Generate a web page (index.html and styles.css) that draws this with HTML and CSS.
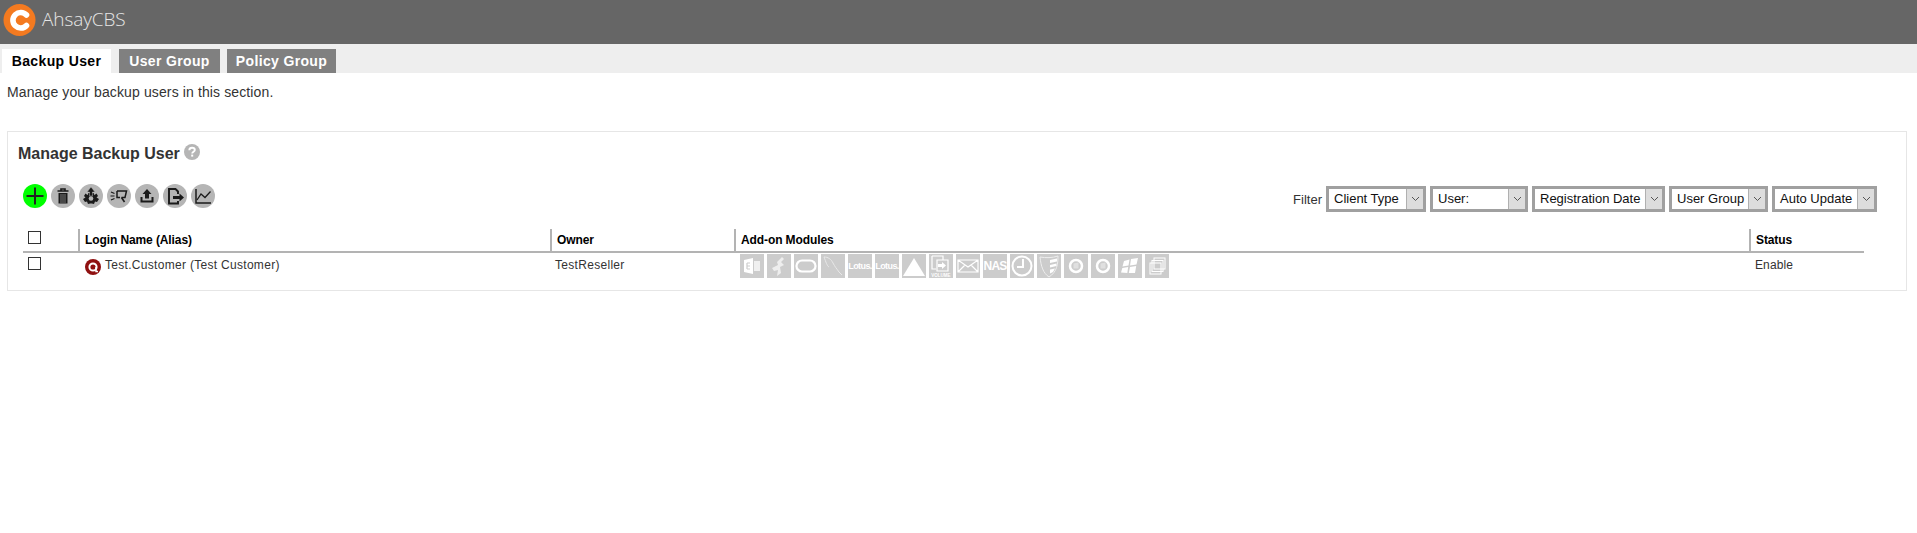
FILE: index.html
```html
<!DOCTYPE html>
<html lang="en">
<head>
<meta charset="utf-8">
<title>AhsayCBS</title>
<link rel="stylesheet" href="styles.css">
</head>
<body>
<header class="topbar">
  <svg class="logo" width="34" height="34" viewBox="0 0 34 34"><circle cx="16.500" cy="17" r="16" fill="#f47a20"/><path d="M23.500 12A7.800 7.800 0 1 0 23.500 22.500" fill="none" stroke="#fff" stroke-width="5.600" stroke-linecap="round"/></svg>
  <span class="brand">AhsayCBS</span>
</header>
<nav class="tabs">
  <a class="tab tab-active">Backup User</a>
  <a class="tab tab-group">User Group</a>
  <a class="tab">Policy Group</a>
</nav>
<p class="intro">Manage your backup users in this section.</p>
<section class="panel">
  <h1 class="title">Manage Backup User
    <svg class="help" width="16" height="16" viewBox="0 0 16 16"><circle cx="8" cy="8" r="8" fill="#b5b5b5"/><path d="M5.300 6.200C5.400 4.600 6.500 3.800 8 3.800S10.800 4.700 10.800 6C10.800 7.700 8.200 7.800 8.200 9.600" fill="none" stroke="#fff" stroke-width="1.900"/><rect x="7.200" y="10.600" width="2" height="2" fill="#fff"/></svg>
  </h1>
  <div class="toolbar">
    <div class="actions">
      <span class="action action-add"><svg viewBox="0 0 24 24"><path d="M12 3.500V20.500M3.500 12H20.500" stroke="#222" stroke-width="2" fill="none"/></svg></span>
      <span class="action"><svg viewBox="0 0 24 24"><path d="M6.500 7H17.500M10 7V5H14V7" stroke="#1a1a1a" stroke-width="1.600" fill="none"/><path d="M7.500 9H16.500V19.500H7.500Z" fill="#1a1a1a"/><path d="M10 10V19M12 10V19M14 10V19" stroke="#b5b5b5" stroke-width=".6"/></svg></span>
      <span class="action"><svg viewBox="0 0 24 24"><path d="M6.500 9.500L8.500 11 9.200 10V9H14.800V10L15.500 11 17.500 9.500 19 12 17.500 13.500 20 15 18 18 16 17.500 15 20 12.800 19.500H11.200L9 20 8 17.500 6 18 4 15 6.500 13.500 5 12Z" fill="#1a1a1a"/><circle cx="12" cy="14.500" r="2.300" fill="#b5b5b5"/><path d="M12 3L16 8H13.500V12H10.500V8H8Z" fill="#1a1a1a" stroke="#b5b5b5" stroke-width=".5"/></svg></span>
      <span class="action"><svg viewBox="0 0 24 24"><path d="M10 7H19.500L18 13.500H14.500M10 7V13.500H13" fill="none" stroke="#1a1a1a" stroke-width="1.500"/><path d="M14.500 13.500L17.500 18" stroke="#1a1a1a" stroke-width="1.600"/><path d="M4 8L7.500 9.500M3.500 12H7.500M4 16L7.500 14.500" stroke="#1a1a1a" stroke-width="1.200"/></svg></span>
      <span class="action"><svg viewBox="0 0 24 24"><path d="M12 5L16.500 10H14V14.500H10V10H7.500Z" fill="#1a1a1a"/><path d="M5.500 13V18.500H18.500V13H16.500V16.500H7.500V13Z" fill="#1a1a1a"/></svg></span>
      <span class="action"><svg viewBox="0 0 24 24"><path d="M15 10V7.500L12.500 5H6V19.500H15V17" fill="none" stroke="#1a1a1a" stroke-width="1.900"/><path d="M10 12H16.500V9.500L21 13.500 16.500 17.500V15H10Z" fill="#1a1a1a"/></svg></span>
      <span class="action"><svg viewBox="0 0 24 24"><path d="M5 5V19H20" fill="none" stroke="#1a1a1a" stroke-width="1.500"/><path d="M6 16L10 10 14 13.500 19.500 7.500" fill="none" stroke="#1a1a1a" stroke-width="1.300"/></svg></span>
    </div>
    <div class="filters">
      <span class="filter-label">Filter</span>
      <div class="select select-type"><span class="select-text">Client Type</span><span class="select-arrow"><svg width="9" height="6" viewBox="0 0 9 6"><path d="M1 1L4.500 4.500 8 1" fill="none" stroke="#555"/></svg></span></div>
      <div class="select select-user"><span class="select-text">User:</span><span class="select-arrow"><svg width="9" height="6" viewBox="0 0 9 6"><path d="M1 1L4.500 4.500 8 1" fill="none" stroke="#555"/></svg></span></div>
      <div class="select select-date"><span class="select-text">Registration Date</span><span class="select-arrow"><svg width="9" height="6" viewBox="0 0 9 6"><path d="M1 1L4.500 4.500 8 1" fill="none" stroke="#555"/></svg></span></div>
      <div class="select select-group"><span class="select-text">User Group</span><span class="select-arrow"><svg width="9" height="6" viewBox="0 0 9 6"><path d="M1 1L4.500 4.500 8 1" fill="none" stroke="#555"/></svg></span></div>
      <div class="select select-update"><span class="select-text">Auto Update</span><span class="select-arrow"><svg width="9" height="6" viewBox="0 0 9 6"><path d="M1 1L4.500 4.500 8 1" fill="none" stroke="#555"/></svg></span></div>
    </div>
  </div>
  <div class="grid grid-head">
    <div class="cell cell-check"><span class="checkbox"></span></div>
    <div class="cell cell-sep">Login Name (Alias)</div>
    <div class="cell cell-sep">Owner</div>
    <div class="cell cell-sep">Add-on Modules</div>
    <div class="cell cell-sep">Status</div>
  </div>
  <div class="grid grid-row">
    <div class="cell cell-check"><span class="checkbox"></span></div>
    <div class="cell cell-user"><svg class="avatar" width="16" height="16" viewBox="0 0 16 16"><circle cx="8" cy="8" r="8" fill="#8f1010"/><circle cx="8" cy="8" r="3.600" fill="none" stroke="#fff" stroke-width="2"/><path d="M11 8V12.500H13" stroke="#fff" stroke-width="1.500" fill="none"/></svg>Test.Customer (Test Customer)</div>
    <div class="cell cell-owner">TestReseller</div>
    <div class="cell modules">
      <span class="mod"><svg viewBox="0 0 24 24"><path d="M4 6L13 4V20L4 18Z" fill="#fff"/><path d="M14 7H20V17H14Z" fill="#fff" opacity=".7"/><path d="M7 9H10M7 12H10M7 15H10M7 9V15" stroke="#ccc" stroke-width="1.200"/></svg></span>
      <span class="mod"><svg viewBox="0 0 24 24"><path d="M15 3L17 5 14 8 17 11 13 13 14 19 10 22 11 16 7 17 5 14 11 11 10 8Z" fill="#eee"/></svg></span>
      <span class="mod"><svg viewBox="0 0 24 24"><rect x="2.500" y="6.500" width="19" height="11" rx="5.500" fill="none" stroke="#fff" stroke-width="2.200"/></svg></span>
      <span class="mod"><svg viewBox="0 0 24 24"><path d="M3 3C7 3 10 5 12 9S16 15 18 18L21 21M3 3C5 8 6 12 8 13" fill="none" stroke="#e8e8e8" stroke-width="1"/></svg></span>
      <span class="mod mod-text mod-lotus">Lotus.</span>
      <span class="mod mod-text mod-lotus">Lotus.</span>
      <span class="mod"><svg viewBox="0 0 24 24"><path d="M12 4L23 22H1Z" fill="#fff"/></svg></span>
      <span class="mod"><svg viewBox="0 0 24 24"><path d="M3 2H14V6M3 2V15H7M8 6H19V17H8Z" fill="none" stroke="#fff" stroke-width="1.200"/><path d="M9 10H13V8L17 11.500 13 15V13H9Z" fill="#fff"/><text x="12" y="23" text-anchor="middle" class="mod-small">VOLUME</text></svg></span>
      <span class="mod"><svg viewBox="0 0 24 24"><path d="M2 6H22V18H2ZM2 6L12 13 22 6M2 18L9 11M22 18L15 11" fill="none" stroke="#fff" stroke-width="1.200"/></svg></span>
      <span class="mod mod-text mod-nas">NAS</span>
      <span class="mod"><svg viewBox="0 0 24 24"><circle cx="12" cy="12" r="9.500" fill="none" stroke="#fff" stroke-width="2"/><path d="M13 5V13H7" fill="none" stroke="#fff" stroke-width="2"/></svg></span>
      <span class="mod"><svg viewBox="0 0 24 24"><path d="M3 3C9 4 15 4 21 2C21 10 20 18 12 23C6 19 4 12 3 3Z" fill="none" stroke="#eee" stroke-width="1"/><path d="M13 6L20 4.500V7.500L13 9ZM13 11L19.500 9.500V12L13 13.500ZM13 15.500L18 14.500 16 18 13 19.500Z" fill="#fff"/></svg></span>
      <span class="mod"><svg viewBox="0 0 24 24"><circle cx="12" cy="12" r="6" fill="none" stroke="#fff" stroke-width="2.500"/><path d="M9.500 9.500L14.500 8.500V14.500L9.500 14.500Z" fill="#fff" opacity=".4"/></svg></span>
      <span class="mod"><svg viewBox="0 0 24 24"><circle cx="12" cy="12" r="6" fill="none" stroke="#fff" stroke-width="2.500"/><path d="M9.500 9.500L14.500 8.500V14.500L9.500 14.500Z" fill="#fff" opacity=".4"/></svg></span>
      <span class="mod"><svg viewBox="0 0 24 24"><path d="M6 7L11.500 5.500 10.500 11.500 4.500 12.500ZM13 5L20 4 18.500 10.500 12 11.500ZM4.300 14L10.200 13 9.300 19 3 18.500ZM12 13L18.200 12 17 19 10.800 19Z" fill="#fff"/></svg></span>
      <span class="mod"><svg viewBox="0 0 24 24"><rect x="9" y="4" width="11" height="11" fill="none" stroke="#fff"/><rect x="7" y="6.500" width="11" height="11" fill="none" stroke="#fff"/><rect x="5" y="9" width="11" height="11" fill="none" stroke="#fff"/></svg></span>
    </div>
    <div class="cell cell-status">Enable</div>
  </div>
</section>
</body>
</html>
```
FILE: styles.css
```css
html, body { margin: 0; padding: 0; background: #fff; }
body { font-family: "Liberation Sans", Arial, sans-serif; color: #333; height: 533px; overflow: hidden; }

.topbar { height: 44px; background: #666; display: flex; align-items: center; padding-left: 3px; box-sizing: border-box; }
.logo { display: block; margin-bottom: 4px; }
.brand { font-family: "Open Sans", sans-serif; font-weight: 300; font-size: 19px; color: #e6e6e6; margin: 0 0 7px 5px; letter-spacing: -.1px; }

.tabs { height: 29px; box-sizing: border-box; background: #eee; display: flex; align-items: flex-end; padding-left: 2px; gap: 7px; }
.tab { width: 109px; height: 24px; line-height: 24px; text-align: center; font-size: 14px; font-weight: bold; letter-spacing: .35px; color: #fff; background: #808080; box-sizing: border-box; }
.tab-active { background: #fff; color: #000; margin-right: 1px; }
.tab-group { width: 101px; }

.intro { margin: 0; padding: 11px 0 0 7px; height: 58px; box-sizing: border-box; font-size: 14px; line-height: 16px; letter-spacing: .12px; color: #333; }

.panel { margin: 0 10px 0 7px; height: 160px; box-sizing: border-box; border: 1px solid #e6e6e6; padding: 12px 0 0 10px; }
.title { margin: 0; font-size: 16px; line-height: 20px; font-weight: bold; color: #333; display: flex; align-items: flex-start; gap: 4px; }
.help { display: block; }

.toolbar { display: flex; justify-content: space-between; align-items: flex-start; margin: 20px 0 0 5px; height: 28px; padding-right: 29px; }
.actions { display: flex; gap: 4px; }
.action { width: 24px; height: 24px; border-radius: 50%; background: #b5b5b5; display: block; }
.action-add { background: #0f0; }
.action svg { display: block; width: 24px; height: 24px; }

.filters { display: flex; align-items: center; gap: 4px; font-size: 13px; margin-top: 2px; }
.select { display: flex; height: 26px; box-sizing: border-box; border: 3px solid #a0a0a0; background: #fff; color: #111; }
.select-text { flex: 1; padding-left: 5px; line-height: 20px; white-space: nowrap; }
.select-arrow { width: 17px; background: #ddd; border-left: 1px solid #b0b0b0; display: flex; align-items: center; justify-content: center; box-sizing: border-box; }
.select-type { width: 100px; }
.select-user { width: 98px; }
.select-date { width: 133px; }
.select-group { width: 99px; }
.select-update { width: 105px; }

.grid { display: grid; grid-template-columns: 55px 472px 184px 1015px 1fr; margin: 0 42px 0 5px; }
.grid-head { margin-top: 17px; height: 24px; box-sizing: border-box; border-bottom: 2px solid #b3b3b3; font-size: 12px; font-weight: bold; letter-spacing: -.1px; color: #000; }
.grid-head .cell { line-height: 22px; height: 22px; }
.cell { padding-left: 5px; white-space: nowrap; }
.cell-sep { border-left: 2px solid #b3b3b3; }
.checkbox { display: block; width: 11px; height: 11px; border: 1px solid #333; }
.grid-head .checkbox { margin-top: 2px; }
.grid-row { font-size: 12px; line-height: 24px; letter-spacing: .3px; color: #333; }
.grid-row .cell { height: 26px; }
.grid-row .checkbox { margin-top: 4px; }
.cell-user { display: flex; align-items: flex-start; gap: 4px; padding-left: 7px; }
.avatar { display: block; margin-top: 6px; flex: none; }
.cell-status { padding-left: 6px; letter-spacing: .1px; }
.modules { display: flex; gap: 3px; padding-left: 6px; }
.mod { width: 24px; height: 24px; background: #ccc; display: block; flex: none; margin-top: 1px; }
.mod svg { display: block; width: 24px; height: 24px; }
.mod-text { color: #fff; font-weight: bold; text-align: center; }
.mod-lotus { font-size: 9px; line-height: 24px; letter-spacing: -.6px; }
.mod-nas { font-size: 12px; line-height: 24px; letter-spacing: -.8px; }
.mod-small { font-size: 4.500px; font-weight: bold; fill: #fff; letter-spacing: 0; }
```
